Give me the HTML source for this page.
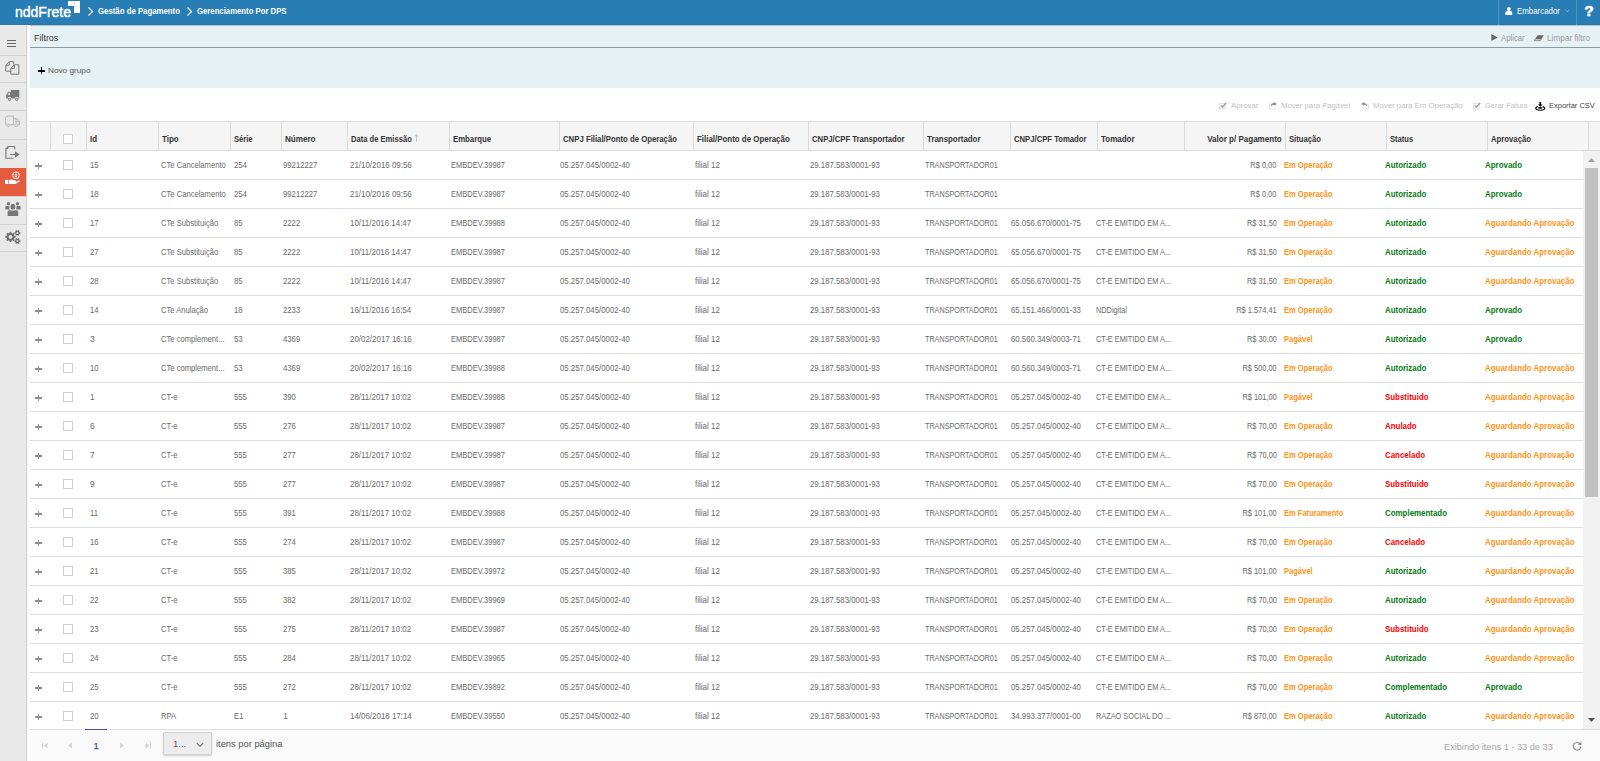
<!DOCTYPE html>
<html lang="pt-BR"><head><meta charset="utf-8"><title>nddFrete - Gerenciamento Por DPS</title>
<style>
html,body{margin:0;padding:0}
body{width:1600px;height:761px;position:relative;overflow:hidden;background:#fff;font-family:'Liberation Sans', sans-serif;}
body>div,body>span,body>svg{position:absolute;display:block}
body>span{white-space:pre}
</style></head><body>
<div style="left:0px;top:0px;width:1600px;height:25px;background:#277db4;"></div>
<div style="left:0px;top:24px;width:1600px;height:1px;background:#2178b3;"></div>
<div style="left:1498px;top:0px;width:1px;height:25px;background:#4d95c3;"></div>
<div style="left:1576px;top:0px;width:1px;height:25px;background:#4d95c3;"></div>
<div style="left:68.2px;top:1.05px;width:11.8px;height:5.45px;background:#fff;"></div>
<div style="left:74.3px;top:6.5px;width:5.7px;height:6.5px;background:#fff;"></div>
<div style="left:74.05px;top:1.05px;width:0.5px;height:5.45px;background:#dde9f2;"></div>
<div style="left:74.3px;top:6.45px;width:5.7px;height:0.45px;background:#dde9f2;"></div>
<svg style="left:87px;top:6px" width="7" height="11" viewBox="0 0 7 11"><path d="M1.5 1.5 L5.5 5.5 L1.5 9.5" fill="none" stroke="#fff" stroke-width="1.2"/></svg>
<svg style="left:186px;top:6px" width="7" height="11" viewBox="0 0 7 11"><path d="M1.5 1.5 L5.5 5.5 L1.5 9.5" fill="none" stroke="#fff" stroke-width="1.2"/></svg>
<svg style="left:1505px;top:6.6px" width="7.6" height="8.4" viewBox="0 0 8 9"><circle cx="4" cy="2.2" r="2.1" fill="#fff"/><path d="M0.3 9 V6.2 Q0.3 4.3 2.2 4.3 H5.8 Q7.7 4.3 7.7 6.2 V9 Z" fill="#fff"/></svg>
<svg style="left:1565px;top:8.5px" width="5" height="4" viewBox="0 0 5 4"><path d="M0.5 0.8 L2.5 2.8 L4.5 0.8" fill="none" stroke="#9cc3de" stroke-width="0.8"/></svg>
<div style="left:0px;top:25px;width:26px;height:736px;background:#e9e9e9;"></div>
<div style="left:26px;top:25px;width:1px;height:736px;background:#d3d3cf;"></div>
<div style="left:0px;top:25px;width:26px;height:1px;background:#f1eeeb;"></div>
<div style="left:27px;top:25px;width:3px;height:736px;background:linear-gradient(90deg,#f0f0f0,#ffffff 60%)"></div>
<div style="left:0px;top:55px;width:26px;height:1px;background:#d2d2d2;"></div>
<div style="left:0px;top:82px;width:26px;height:1px;background:#d2d2d2;"></div>
<div style="left:0px;top:110px;width:26px;height:1px;background:#d2d2d2;"></div>
<div style="left:0px;top:139px;width:26px;height:1px;background:#d2d2d2;"></div>
<div style="left:0px;top:196px;width:26px;height:1px;background:#d2d2d2;"></div>
<div style="left:0px;top:224px;width:26px;height:1px;background:#d2d2d2;"></div>
<div style="left:0px;top:251px;width:26px;height:1px;background:#d2d2d2;"></div>
<div style="left:0px;top:168px;width:26px;height:28px;background:#e25c3d;"></div>
<div style="left:7.3px;top:40px;width:8.7px;height:1px;background:#666;"></div>
<div style="left:7.3px;top:43px;width:8.7px;height:1px;background:#666;"></div>
<div style="left:7.3px;top:46px;width:8.7px;height:1px;background:#666;"></div>
<div style="left:30px;top:25px;width:1570px;height:63px;background:#e6f1f4;"></div>
<div style="left:30px;top:47px;width:1570px;height:1px;background:#8e9a9d;"></div>
<div style="left:30px;top:25px;width:1570px;height:1px;background:#c6c4c0;"></div>
<div style="left:38.1px;top:69.75px;width:6.7px;height:1.8px;background:#000;"></div>
<div style="left:40.55px;top:67.3px;width:1.8px;height:6.7px;background:#000;"></div>
<svg style="left:1491px;top:34.3px" width="7" height="7" viewBox="0 0 7 7"><path d="M0.3 0 L6.8 3.5 L0.3 7 Z" fill="#666"/></svg>
<svg style="left:1534px;top:34.5px" width="10" height="7" viewBox="0 0 10 7"><path d="M3.6 0.3 H9.8 L6.4 5.6 H0.2 Z" fill="#666"/><path d="M1.2 4 H7.4 L6.4 5.6 H0.2 Z" fill="#e6f1f4" stroke="#666" stroke-width="0.6"/></svg>
<svg style="left:1218.6px;top:102px" width="8" height="8" viewBox="0 0 8 8"><rect x="0.6" y="1.4" width="5.6" height="5.4" fill="none" stroke="#dedede" stroke-width="0.9"/><path d="M1.7 3.4 L3.3 5.2 L7.2 0.9" fill="none" stroke="#8f8f8f" stroke-width="1.1"/></svg>
<svg style="left:1268.8px;top:102px" width="8" height="8" viewBox="0 0 8 8"><path d="M2.6 2.2 H0.6 V6.8 H6.2 V5" fill="none" stroke="#dcdcdc" stroke-width="0.9"/><path d="M4.9 0 L7.9 1.9 L4.9 3.8 V2.7 Q3 2.7 1.8 4.6 Q2 1.3 4.9 1.1 Z" fill="#8f8f8f"/></svg>
<svg style="left:1361px;top:102px" width="8" height="8" viewBox="0 0 8 8"><path d="M5.4 2.2 H7.4 V6.8 H1.8 V5" fill="none" stroke="#dcdcdc" stroke-width="0.9"/><path d="M3.1 0 L0.1 1.9 L3.1 3.8 V2.7 Q5 2.7 6.2 4.6 Q6 1.3 3.1 1.1 Z" fill="#8f8f8f"/></svg>
<svg style="left:1473px;top:102px" width="8" height="8" viewBox="0 0 8 8"><rect x="0.6" y="1.4" width="5.6" height="5.4" fill="none" stroke="#dedede" stroke-width="0.9"/><path d="M1.7 3.4 L3.3 5.2 L7.2 0.9" fill="none" stroke="#8f8f8f" stroke-width="1.1"/></svg>
<svg style="left:1535.2px;top:101.6px" width="10.5" height="9.3" viewBox="0 0 11 10"><path d="M4.6 0 H6.4 V2.6 H8 L5.5 5 L3 2.6 H4.6 Z" fill="#000"/><path d="M2.6 4.6 L0.6 6.5 Q0.6 8.9 5.5 8.9 Q10.4 8.9 10.4 6.5 L8.4 4.6" fill="none" stroke="#000" stroke-width="1.2"/><ellipse cx="5.5" cy="6.3" rx="2.6" ry="0.9" fill="#000"/></svg>
<div style="left:30px;top:121px;width:1570px;height:30px;background:#f5f5f5;"></div>
<div style="left:30px;top:121px;width:1570px;height:1px;background:#dcdcdc;"></div>
<div style="left:30px;top:150px;width:1570px;height:1px;background:#dcdcdc;"></div>
<div style="left:50px;top:122px;width:1px;height:28px;background:#dcdcdc;"></div>
<div style="left:86px;top:122px;width:1px;height:28px;background:#dcdcdc;"></div>
<div style="left:158px;top:122px;width:1px;height:28px;background:#dcdcdc;"></div>
<div style="left:230px;top:122px;width:1px;height:28px;background:#dcdcdc;"></div>
<div style="left:281px;top:122px;width:1px;height:28px;background:#dcdcdc;"></div>
<div style="left:347px;top:122px;width:1px;height:28px;background:#dcdcdc;"></div>
<div style="left:449px;top:122px;width:1px;height:28px;background:#dcdcdc;"></div>
<div style="left:559px;top:122px;width:1px;height:28px;background:#dcdcdc;"></div>
<div style="left:693px;top:122px;width:1px;height:28px;background:#dcdcdc;"></div>
<div style="left:808px;top:122px;width:1px;height:28px;background:#dcdcdc;"></div>
<div style="left:923px;top:122px;width:1px;height:28px;background:#dcdcdc;"></div>
<div style="left:1010px;top:122px;width:1px;height:28px;background:#dcdcdc;"></div>
<div style="left:1097px;top:122px;width:1px;height:28px;background:#dcdcdc;"></div>
<div style="left:1184px;top:122px;width:1px;height:28px;background:#dcdcdc;"></div>
<div style="left:1285px;top:122px;width:1px;height:28px;background:#dcdcdc;"></div>
<div style="left:1386px;top:122px;width:1px;height:28px;background:#dcdcdc;"></div>
<div style="left:1487px;top:122px;width:1px;height:28px;background:#dcdcdc;"></div>
<div style="left:1588px;top:122px;width:1px;height:28px;background:#dcdcdc;"></div>
<svg style="left:414.4px;top:134px" width="5" height="8" viewBox="0 0 5 8"><path d="M2.5 1 V7.7" fill="none" stroke="#c6c6c6" stroke-width="1"/><path d="M0.3 2.6 L2.5 0.1 L4.7 2.6 Z" fill="#c6c6c6"/></svg>
<div style="left:63px;top:134px;width:8px;height:8px;background:#fff;border:1px solid #cfcfcf"></div>
<div style="left:30px;top:179px;width:1553px;height:1px;background:#dedede;"></div>
<div style="left:35.3px;top:165.35px;width:6.6px;height:1.3px;background:#8e8e8e;"></div>
<div style="left:37.75px;top:162.7px;width:1.5px;height:6.6px;background:#8e8e8e;"></div>
<div style="left:63px;top:160px;width:8px;height:8px;background:#fff;border:1px solid #cfcfcf"></div>
<div style="left:30px;top:208px;width:1553px;height:1px;background:#dedede;"></div>
<div style="left:35.3px;top:194.35px;width:6.6px;height:1.3px;background:#8e8e8e;"></div>
<div style="left:37.75px;top:191.7px;width:1.5px;height:6.6px;background:#8e8e8e;"></div>
<div style="left:63px;top:189px;width:8px;height:8px;background:#fff;border:1px solid #cfcfcf"></div>
<div style="left:30px;top:237px;width:1553px;height:1px;background:#dedede;"></div>
<div style="left:35.3px;top:223.35px;width:6.6px;height:1.3px;background:#8e8e8e;"></div>
<div style="left:37.75px;top:220.7px;width:1.5px;height:6.6px;background:#8e8e8e;"></div>
<div style="left:63px;top:218px;width:8px;height:8px;background:#fff;border:1px solid #cfcfcf"></div>
<div style="left:30px;top:266px;width:1553px;height:1px;background:#dedede;"></div>
<div style="left:35.3px;top:252.35px;width:6.6px;height:1.3px;background:#8e8e8e;"></div>
<div style="left:37.75px;top:249.7px;width:1.5px;height:6.6px;background:#8e8e8e;"></div>
<div style="left:63px;top:247px;width:8px;height:8px;background:#fff;border:1px solid #cfcfcf"></div>
<div style="left:30px;top:295px;width:1553px;height:1px;background:#dedede;"></div>
<div style="left:35.3px;top:281.35px;width:6.6px;height:1.3px;background:#8e8e8e;"></div>
<div style="left:37.75px;top:278.7px;width:1.5px;height:6.6px;background:#8e8e8e;"></div>
<div style="left:63px;top:276px;width:8px;height:8px;background:#fff;border:1px solid #cfcfcf"></div>
<div style="left:30px;top:324px;width:1553px;height:1px;background:#dedede;"></div>
<div style="left:35.3px;top:310.35px;width:6.6px;height:1.3px;background:#8e8e8e;"></div>
<div style="left:37.75px;top:307.7px;width:1.5px;height:6.6px;background:#8e8e8e;"></div>
<div style="left:63px;top:305px;width:8px;height:8px;background:#fff;border:1px solid #cfcfcf"></div>
<div style="left:30px;top:353px;width:1553px;height:1px;background:#dedede;"></div>
<div style="left:35.3px;top:339.35px;width:6.6px;height:1.3px;background:#8e8e8e;"></div>
<div style="left:37.75px;top:336.7px;width:1.5px;height:6.6px;background:#8e8e8e;"></div>
<div style="left:63px;top:334px;width:8px;height:8px;background:#fff;border:1px solid #cfcfcf"></div>
<div style="left:30px;top:382px;width:1553px;height:1px;background:#dedede;"></div>
<div style="left:35.3px;top:368.35px;width:6.6px;height:1.3px;background:#8e8e8e;"></div>
<div style="left:37.75px;top:365.7px;width:1.5px;height:6.6px;background:#8e8e8e;"></div>
<div style="left:63px;top:363px;width:8px;height:8px;background:#fff;border:1px solid #cfcfcf"></div>
<div style="left:30px;top:411px;width:1553px;height:1px;background:#dedede;"></div>
<div style="left:35.3px;top:397.35px;width:6.6px;height:1.3px;background:#8e8e8e;"></div>
<div style="left:37.75px;top:394.7px;width:1.5px;height:6.6px;background:#8e8e8e;"></div>
<div style="left:63px;top:392px;width:8px;height:8px;background:#fff;border:1px solid #cfcfcf"></div>
<div style="left:30px;top:440px;width:1553px;height:1px;background:#dedede;"></div>
<div style="left:35.3px;top:426.35px;width:6.6px;height:1.3px;background:#8e8e8e;"></div>
<div style="left:37.75px;top:423.7px;width:1.5px;height:6.6px;background:#8e8e8e;"></div>
<div style="left:63px;top:421px;width:8px;height:8px;background:#fff;border:1px solid #cfcfcf"></div>
<div style="left:30px;top:469px;width:1553px;height:1px;background:#dedede;"></div>
<div style="left:35.3px;top:455.35px;width:6.6px;height:1.3px;background:#8e8e8e;"></div>
<div style="left:37.75px;top:452.7px;width:1.5px;height:6.6px;background:#8e8e8e;"></div>
<div style="left:63px;top:450px;width:8px;height:8px;background:#fff;border:1px solid #cfcfcf"></div>
<div style="left:30px;top:498px;width:1553px;height:1px;background:#dedede;"></div>
<div style="left:35.3px;top:484.35px;width:6.6px;height:1.3px;background:#8e8e8e;"></div>
<div style="left:37.75px;top:481.7px;width:1.5px;height:6.6px;background:#8e8e8e;"></div>
<div style="left:63px;top:479px;width:8px;height:8px;background:#fff;border:1px solid #cfcfcf"></div>
<div style="left:30px;top:527px;width:1553px;height:1px;background:#dedede;"></div>
<div style="left:35.3px;top:513.35px;width:6.6px;height:1.3px;background:#8e8e8e;"></div>
<div style="left:37.75px;top:510.7px;width:1.5px;height:6.6px;background:#8e8e8e;"></div>
<div style="left:63px;top:508px;width:8px;height:8px;background:#fff;border:1px solid #cfcfcf"></div>
<div style="left:30px;top:556px;width:1553px;height:1px;background:#dedede;"></div>
<div style="left:35.3px;top:542.35px;width:6.6px;height:1.3px;background:#8e8e8e;"></div>
<div style="left:37.75px;top:539.7px;width:1.5px;height:6.6px;background:#8e8e8e;"></div>
<div style="left:63px;top:537px;width:8px;height:8px;background:#fff;border:1px solid #cfcfcf"></div>
<div style="left:30px;top:585px;width:1553px;height:1px;background:#dedede;"></div>
<div style="left:35.3px;top:571.35px;width:6.6px;height:1.3px;background:#8e8e8e;"></div>
<div style="left:37.75px;top:568.7px;width:1.5px;height:6.6px;background:#8e8e8e;"></div>
<div style="left:63px;top:566px;width:8px;height:8px;background:#fff;border:1px solid #cfcfcf"></div>
<div style="left:30px;top:614px;width:1553px;height:1px;background:#dedede;"></div>
<div style="left:35.3px;top:600.35px;width:6.6px;height:1.3px;background:#8e8e8e;"></div>
<div style="left:37.75px;top:597.7px;width:1.5px;height:6.6px;background:#8e8e8e;"></div>
<div style="left:63px;top:595px;width:8px;height:8px;background:#fff;border:1px solid #cfcfcf"></div>
<div style="left:30px;top:643px;width:1553px;height:1px;background:#dedede;"></div>
<div style="left:35.3px;top:629.35px;width:6.6px;height:1.3px;background:#8e8e8e;"></div>
<div style="left:37.75px;top:626.7px;width:1.5px;height:6.6px;background:#8e8e8e;"></div>
<div style="left:63px;top:624px;width:8px;height:8px;background:#fff;border:1px solid #cfcfcf"></div>
<div style="left:30px;top:672px;width:1553px;height:1px;background:#dedede;"></div>
<div style="left:35.3px;top:658.35px;width:6.6px;height:1.3px;background:#8e8e8e;"></div>
<div style="left:37.75px;top:655.7px;width:1.5px;height:6.6px;background:#8e8e8e;"></div>
<div style="left:63px;top:653px;width:8px;height:8px;background:#fff;border:1px solid #cfcfcf"></div>
<div style="left:30px;top:701px;width:1553px;height:1px;background:#dedede;"></div>
<div style="left:35.3px;top:687.35px;width:6.6px;height:1.3px;background:#8e8e8e;"></div>
<div style="left:37.75px;top:684.7px;width:1.5px;height:6.6px;background:#8e8e8e;"></div>
<div style="left:63px;top:682px;width:8px;height:8px;background:#fff;border:1px solid #cfcfcf"></div>
<div style="left:30px;top:730px;width:1553px;height:1px;background:#dedede;"></div>
<div style="left:35.3px;top:716.35px;width:6.6px;height:1.3px;background:#8e8e8e;"></div>
<div style="left:37.75px;top:713.7px;width:1.5px;height:6.6px;background:#8e8e8e;"></div>
<div style="left:63px;top:711px;width:8px;height:8px;background:#fff;border:1px solid #cfcfcf"></div>
<div style="left:1583px;top:151px;width:17px;height:579px;background:#f1f1f1;"></div>
<div style="left:1585px;top:168px;width:13px;height:329px;background:#c1c1c1;"></div>
<svg style="left:1588px;top:158px" width="7" height="4" viewBox="0 0 7 4"><path d="M0 4 L3.5 0 L7 4 Z" fill="#a3a3a3"/></svg>
<svg style="left:1588px;top:718px" width="7" height="4" viewBox="0 0 7 4"><path d="M0 0 L3.5 4 L7 0 Z" fill="#505050"/></svg>
<div style="left:30px;top:730px;width:1570px;height:31px;background:#fafafa;"></div>
<div style="left:30px;top:729px;width:1570px;height:1px;background:#dedede;"></div>
<div style="left:85px;top:729px;width:22px;height:1.2px;background:#3f51b5;"></div>
<svg style="left:42px;top:742px" width="6" height="7" viewBox="0 0 6 7"><path d="M0.5 0.3 V6.7" stroke="#d2d2d2" stroke-width="1"/><path d="M5.5 0.5 L1.8 3.5 L5.5 6.5 Z" fill="#d2d2d2"/></svg>
<svg style="left:68px;top:742px" width="4" height="7" viewBox="0 0 4 7"><path d="M3.8 0.5 L0.3 3.5 L3.8 6.5 Z" fill="#d2d2d2"/></svg>
<svg style="left:120px;top:742px" width="4" height="7" viewBox="0 0 4 7"><path d="M0.2 0.5 L3.7 3.5 L0.2 6.5 Z" fill="#d2d2d2"/></svg>
<svg style="left:144.5px;top:742px" width="6" height="7" viewBox="0 0 6 7"><path d="M5.5 0.3 V6.7" stroke="#d2d2d2" stroke-width="1"/><path d="M0.5 0.5 L4.2 3.5 L0.5 6.5 Z" fill="#d2d2d2"/></svg>
<div style="left:163px;top:731.6px;width:46.5px;height:21px;background:#ececec;border:1px solid #d0d0d0;border-radius:2px;box-shadow:0 1px 2px rgba(0,0,0,.18)"></div>
<svg style="left:195.5px;top:742px" width="8" height="6" viewBox="0 0 8 6"><path d="M0.8 1 L4 4.4 L7.2 1" fill="none" stroke="#777" stroke-width="1.1"/></svg>
<svg style="left:1572px;top:741px" width="10" height="10" viewBox="0 0 10 10"><path d="M8.3 3.2 A3.8 3.8 0 1 0 8.9 5.4" fill="none" stroke="#8a8a8a" stroke-width="1.1"/><path d="M9.4 0.4 V3.9 H5.9 Z" fill="#8a8a8a"/></svg>
<svg style="left:0;top:0" width="26" height="260" viewBox="0 0 26 260"><g fill="none" stroke="#777" stroke-width="1" stroke-linejoin="round"><path d="M10.8 71.2 H5.8 V65.2 L9.3 61.6 H13.7 V64.6"/><path d="M9.3 61.8 V65.2 H6"/><path d="M14.4 64.8 H18.8 V74.2 H10.8 V68.4 Z"/><path d="M14.4 65 V68.4 H11"/></g><path d="M10.8 90.1 H19.3 V98.6 H18.6 A1.9 1.9 0 0 0 14.8 98.6 H11.5 A1.9 1.9 0 0 0 7.7 98.6 H6.2 V95 L8.2 92 H10.8 Z M7.4 95 H10.2 V93 H8.7 Z" fill="#777" fill-rule="evenodd"/><circle cx="9.6" cy="99.3" r="1.25" fill="none" stroke="#777" stroke-width="0.9"/><circle cx="16.7" cy="99.3" r="1.25" fill="none" stroke="#777" stroke-width="0.9"/><g fill="none" stroke="#b3b3b3" stroke-width="0.9" stroke-linejoin="round"><path d="M5.6 124.8 V117.4 L7 116 H13.4 V124.8"/><path d="M13.4 118.7 H17.2 L19.5 121.3 V124.8 H18 M14.6 124.8 H9.8 M6.6 124.8 H5.6"/><path d="M15 120 H18 M15 121.6 H19 M15 123 H19" stroke-width="0.7"/><circle cx="8.2" cy="125.4" r="1.3"/><circle cx="16.3" cy="125.4" r="1.3"/></g><g fill="none" stroke="#777" stroke-width="1.1" stroke-linejoin="round"><path d="M14.7 149.2 V146.5 H8.2 L5.9 148.8 V158.2 H13.5"/><path d="M10.2 154.5 H15.5" stroke-width="1.2"/></g><path d="M8.4 146.6 V149 H6 Z" fill="#777"/><path d="M15 151.3 L19.7 154.5 L15 157.7 Z" fill="#777"/><circle cx="16" cy="175.3" r="3.3" fill="none" stroke="#fff" stroke-width="1"/><path d="M16 173.4 V177.2 M17 174.3 Q16 173.7 15.2 174.3 Q14.8 175 16 175.3 Q17.2 175.7 16.8 176.4 Q16 177 15 176.3" fill="none" stroke="#fff" stroke-width="0.6"/><rect x="5" y="179.8" width="3.4" height="4.2" fill="#fff"/><path d="M9 179.9 Q11 179.2 12.5 179.8 L15.5 180.6 Q16.2 181.2 15.6 181.8 L18.8 180.6 Q19.9 180.4 19.9 181.2 L15.5 184 H9 Z" fill="#fff"/><g fill="#777"><circle cx="8.5" cy="203.8" r="1.7"/><circle cx="17.5" cy="203.8" r="1.7"/><path d="M5.3 209.6 V207.3 Q5.3 206.1 6.5 206.1 H9.6 V209.6 Z"/><path d="M20.6 209.6 V207.3 Q20.6 206.1 19.4 206.1 H16.3 V209.6 Z"/><ellipse cx="12.9" cy="206.8" rx="2.6" ry="3"/><path d="M7.6 215.7 V212 Q7.6 210.3 9.4 210.3 H16.4 Q18.2 210.3 18.2 212 V215.7 Q18.2 215.9 17.6 215.9 H8.2 Q7.6 215.9 7.6 215.7 Z"/></g><ellipse cx="12.9" cy="206.8" rx="3.2" ry="3.6" fill="none" stroke="#e9e9e9" stroke-width="0.7"/><path d="M15.62 236.01 L15.62 237.79 L14.39 237.83 L13.91 238.99 L14.75 239.89 L13.49 241.15 L12.59 240.31 L11.43 240.79 L11.39 242.02 L9.61 242.02 L9.57 240.79 L8.41 240.31 L7.51 241.15 L6.25 239.89 L7.09 238.99 L6.61 237.83 L5.38 237.79 L5.38 236.01 L6.61 235.97 L7.09 234.81 L6.25 233.91 L7.51 232.65 L8.41 233.49 L9.57 233.01 L9.61 231.78 L11.39 231.78 L11.43 233.01 L12.59 233.49 L13.49 232.65 L14.75 233.91 L13.91 234.81 L14.39 235.97 Z M12.40 236.90 A1.9 1.9 0 1 0 8.60 236.90 A1.9 1.9 0 1 0 12.40 236.90 Z" fill="#6e6e6e" fill-rule="evenodd"/><path d="M20.42 232.19 L20.42 233.61 L19.59 233.61 L19.11 234.44 L19.52 235.16 L18.30 235.87 L17.88 235.15 L16.92 235.15 L16.50 235.87 L15.28 235.16 L15.69 234.44 L15.21 233.61 L14.38 233.61 L14.38 232.19 L15.21 232.19 L15.69 231.36 L15.28 230.64 L16.50 229.93 L16.92 230.65 L17.88 230.65 L18.30 229.93 L19.52 230.64 L19.11 231.36 L19.59 232.19 Z M18.40 232.90 A1.0 1.0 0 1 0 16.40 232.90 A1.0 1.0 0 1 0 18.40 232.90 Z" fill="#6e6e6e" fill-rule="evenodd"/><path d="M20.42 240.29 L20.42 241.71 L19.59 241.71 L19.11 242.54 L19.52 243.26 L18.30 243.97 L17.88 243.25 L16.92 243.25 L16.50 243.97 L15.28 243.26 L15.69 242.54 L15.21 241.71 L14.38 241.71 L14.38 240.29 L15.21 240.29 L15.69 239.46 L15.28 238.74 L16.50 238.03 L16.92 238.75 L17.88 238.75 L18.30 238.03 L19.52 238.74 L19.11 239.46 L19.59 240.29 Z M18.40 241.00 A1.0 1.0 0 1 0 16.40 241.00 A1.0 1.0 0 1 0 18.40 241.00 Z" fill="#6e6e6e" fill-rule="evenodd"/></svg>
<span style="top:3.00px;font-size:15.5px;line-height:18px;color:#fff;left:14.80px;transform:scaleX(0.9025);transform-origin:left center;-webkit-text-stroke:0.45px #fff;">nddFrete</span>
<span style="top:5.00px;font-size:8.5px;line-height:12px;color:#fff;font-weight:700;left:98.00px;transform:scaleX(0.9184);transform-origin:left center;">Gestão de Pagamento</span>
<span style="top:5.00px;font-size:8.5px;line-height:12px;color:#fff;font-weight:700;left:196.50px;transform:scaleX(0.9108);transform-origin:left center;">Gerenciamento Por DPS</span>
<span style="top:5.40px;font-size:9px;line-height:12px;color:#fff;left:1517.00px;transform:scaleX(0.8770);transform-origin:left center;">Embarcador</span>
<span style="top:0.50px;font-size:15px;line-height:20px;color:#fff;font-weight:700;left:1584.60px;-webkit-text-stroke:0.7px #fff;">?</span>
<span style="top:30.80px;font-size:9.5px;line-height:14px;color:#333;left:33.70px;transform:scaleX(0.9391);transform-origin:left center;">Filtros</span>
<span style="top:64.60px;font-size:8px;line-height:12px;color:#555;left:48.10px;transform:scaleX(1.0276);transform-origin:left center;">Novo grupo</span>
<span style="top:32.40px;font-size:8.5px;line-height:12px;color:#999;left:1501.30px;transform:scaleX(0.9121);transform-origin:left center;">Aplicar</span>
<span style="top:32.40px;font-size:8.5px;line-height:12px;color:#999;left:1546.90px;transform:scaleX(0.9706);transform-origin:left center;">Limpar filtro</span>
<span style="top:100.00px;font-size:8px;line-height:12px;color:#c2c2c2;left:1230.90px;transform:scaleX(0.9816);transform-origin:left center;">Aprovar</span>
<span style="top:100.00px;font-size:8px;line-height:12px;color:#c2c2c2;left:1281.00px;transform:scaleX(0.9638);transform-origin:left center;">Mover para Pagável</span>
<span style="top:100.00px;font-size:8px;line-height:12px;color:#c2c2c2;left:1372.75px;transform:scaleX(0.9750);transform-origin:left center;">Mover para Em Operação</span>
<span style="top:100.00px;font-size:8px;line-height:12px;color:#c2c2c2;left:1485.00px;transform:scaleX(0.9335);transform-origin:left center;">Gerar Fatura</span>
<span style="top:100.00px;font-size:8px;line-height:12px;color:#444;left:1548.75px;transform:scaleX(0.9375);transform-origin:left center;">Exportar CSV</span>
<span style="top:132.60px;font-size:8.4px;line-height:12px;color:#333;font-weight:700;left:90.40px;transform:scaleX(0.9392);transform-origin:left center;">Id</span>
<span style="top:132.60px;font-size:8.4px;line-height:12px;color:#333;font-weight:700;left:162.00px;transform:scaleX(0.9554);transform-origin:left center;">Tipo</span>
<span style="top:132.60px;font-size:8.4px;line-height:12px;color:#333;font-weight:700;left:234.00px;transform:scaleX(0.9024);transform-origin:left center;">Série</span>
<span style="top:132.60px;font-size:8.4px;line-height:12px;color:#333;font-weight:700;left:285.25px;transform:scaleX(0.9635);transform-origin:left center;">Número</span>
<span style="top:132.60px;font-size:8.4px;line-height:12px;color:#333;font-weight:700;left:351.40px;transform:scaleX(0.9070);transform-origin:left center;">Data de Emissão</span>
<span style="top:132.60px;font-size:8.4px;line-height:12px;color:#333;font-weight:700;left:453.25px;transform:scaleX(0.9275);transform-origin:left center;">Embarque</span>
<span style="top:132.60px;font-size:8.4px;line-height:12px;color:#333;font-weight:700;left:563.00px;transform:scaleX(0.9278);transform-origin:left center;">CNPJ Filial/Ponto de Operação</span>
<span style="top:132.60px;font-size:8.4px;line-height:12px;color:#333;font-weight:700;left:697.25px;transform:scaleX(0.9445);transform-origin:left center;">Filial/Ponto de Operação</span>
<span style="top:132.60px;font-size:8.4px;line-height:12px;color:#333;font-weight:700;left:812.00px;transform:scaleX(0.9203);transform-origin:left center;">CNPJ/CPF Transportador</span>
<span style="top:132.60px;font-size:8.4px;line-height:12px;color:#333;font-weight:700;left:927.00px;transform:scaleX(0.9422);transform-origin:left center;">Transportador</span>
<span style="top:132.60px;font-size:8.4px;line-height:12px;color:#333;font-weight:700;left:1014.00px;transform:scaleX(0.9183);transform-origin:left center;">CNPJ/CPF Tomador</span>
<span style="top:132.60px;font-size:8.4px;line-height:12px;color:#333;font-weight:700;left:1101.00px;transform:scaleX(0.9512);transform-origin:left center;">Tomador</span>
<span style="top:132.60px;font-size:8.4px;line-height:12px;color:#333;font-weight:700;left:1289.00px;transform:scaleX(0.9163);transform-origin:left center;">Situação</span>
<span style="top:132.60px;font-size:8.4px;line-height:12px;color:#333;font-weight:700;left:1390.00px;transform:scaleX(0.9020);transform-origin:left center;">Status</span>
<span style="top:132.60px;font-size:8.4px;line-height:12px;color:#333;font-weight:700;left:1491.25px;transform:scaleX(0.9239);transform-origin:left center;">Aprovação</span>
<span style="top:132.60px;font-size:8.4px;line-height:12px;color:#333;font-weight:700;right:318.50px;transform:scaleX(0.9597);transform-origin:right center;">Valor p/ Pagamento</span>
<span style="top:159.00px;font-size:8.4px;line-height:12px;color:#6a6a6a;left:90.00px;transform:scaleX(0.9238);transform-origin:left center;">15</span>
<span style="top:159.00px;font-size:8.4px;line-height:12px;color:#6a6a6a;left:161.20px;transform:scaleX(0.9095);transform-origin:left center;">CTe Cancelamento</span>
<span style="top:159.00px;font-size:8.4px;line-height:12px;color:#6a6a6a;left:233.50px;transform:scaleX(0.9238);transform-origin:left center;">254</span>
<span style="top:159.00px;font-size:8.4px;line-height:12px;color:#6a6a6a;left:283.25px;transform:scaleX(0.9238);transform-origin:left center;">99212227</span>
<span style="top:159.00px;font-size:8.4px;line-height:12px;color:#6a6a6a;left:349.50px;transform:scaleX(0.9476);transform-origin:left center;">21/10/2016 09:56</span>
<span style="top:159.00px;font-size:8.4px;line-height:12px;color:#6a6a6a;left:451.25px;transform:scaleX(0.8952);transform-origin:left center;">EMBDEV.39987</span>
<span style="top:159.00px;font-size:8.4px;line-height:12px;color:#6a6a6a;left:560.25px;transform:scaleX(0.9314);transform-origin:left center;">05.257.045/0002-40</span>
<span style="top:159.00px;font-size:8.4px;line-height:12px;color:#6a6a6a;left:694.50px;transform:scaleX(0.9524);transform-origin:left center;">filial 12</span>
<span style="top:159.00px;font-size:8.4px;line-height:12px;color:#6a6a6a;left:809.50px;transform:scaleX(0.9314);transform-origin:left center;">29.187.583/0001-93</span>
<span style="top:159.00px;font-size:8.4px;line-height:12px;color:#6a6a6a;left:924.50px;transform:scaleX(0.8619);transform-origin:left center;">TRANSPORTADOR01</span>
<span style="top:159.00px;font-size:8.4px;line-height:12px;color:#6a6a6a;right:323.50px;transform:scaleX(0.8857);transform-origin:right center;">R$ 0,00</span>
<span style="top:159.00px;font-size:8.4px;line-height:12px;color:#ff9416;font-weight:700;left:1283.50px;transform:scaleX(0.9000);transform-origin:left center;">Em Operação</span>
<span style="top:159.00px;font-size:8.4px;line-height:12px;color:#057c12;font-weight:700;left:1384.50px;transform:scaleX(0.9457);transform-origin:left center;">Autorizado</span>
<span style="top:159.00px;font-size:8.4px;line-height:12px;color:#057c12;font-weight:700;left:1485.40px;transform:scaleX(0.9457);transform-origin:left center;">Aprovado</span>
<span style="top:188.00px;font-size:8.4px;line-height:12px;color:#6a6a6a;left:90.00px;transform:scaleX(0.9238);transform-origin:left center;">18</span>
<span style="top:188.00px;font-size:8.4px;line-height:12px;color:#6a6a6a;left:161.20px;transform:scaleX(0.9095);transform-origin:left center;">CTe Cancelamento</span>
<span style="top:188.00px;font-size:8.4px;line-height:12px;color:#6a6a6a;left:233.50px;transform:scaleX(0.9238);transform-origin:left center;">254</span>
<span style="top:188.00px;font-size:8.4px;line-height:12px;color:#6a6a6a;left:283.25px;transform:scaleX(0.9238);transform-origin:left center;">99212227</span>
<span style="top:188.00px;font-size:8.4px;line-height:12px;color:#6a6a6a;left:349.50px;transform:scaleX(0.9476);transform-origin:left center;">21/10/2016 09:56</span>
<span style="top:188.00px;font-size:8.4px;line-height:12px;color:#6a6a6a;left:451.25px;transform:scaleX(0.8952);transform-origin:left center;">EMBDEV.39987</span>
<span style="top:188.00px;font-size:8.4px;line-height:12px;color:#6a6a6a;left:560.25px;transform:scaleX(0.9314);transform-origin:left center;">05.257.045/0002-40</span>
<span style="top:188.00px;font-size:8.4px;line-height:12px;color:#6a6a6a;left:694.50px;transform:scaleX(0.9524);transform-origin:left center;">filial 12</span>
<span style="top:188.00px;font-size:8.4px;line-height:12px;color:#6a6a6a;left:809.50px;transform:scaleX(0.9314);transform-origin:left center;">29.187.583/0001-93</span>
<span style="top:188.00px;font-size:8.4px;line-height:12px;color:#6a6a6a;left:924.50px;transform:scaleX(0.8619);transform-origin:left center;">TRANSPORTADOR01</span>
<span style="top:188.00px;font-size:8.4px;line-height:12px;color:#6a6a6a;right:323.50px;transform:scaleX(0.8857);transform-origin:right center;">R$ 0,00</span>
<span style="top:188.00px;font-size:8.4px;line-height:12px;color:#ff9416;font-weight:700;left:1283.50px;transform:scaleX(0.9000);transform-origin:left center;">Em Operação</span>
<span style="top:188.00px;font-size:8.4px;line-height:12px;color:#057c12;font-weight:700;left:1384.50px;transform:scaleX(0.9457);transform-origin:left center;">Autorizado</span>
<span style="top:188.00px;font-size:8.4px;line-height:12px;color:#057c12;font-weight:700;left:1485.40px;transform:scaleX(0.9457);transform-origin:left center;">Aprovado</span>
<span style="top:217.00px;font-size:8.4px;line-height:12px;color:#6a6a6a;left:90.00px;transform:scaleX(0.9238);transform-origin:left center;">17</span>
<span style="top:217.00px;font-size:8.4px;line-height:12px;color:#6a6a6a;left:161.20px;transform:scaleX(0.9095);transform-origin:left center;">CTe Substituição</span>
<span style="top:217.00px;font-size:8.4px;line-height:12px;color:#6a6a6a;left:233.50px;transform:scaleX(0.9238);transform-origin:left center;">85</span>
<span style="top:217.00px;font-size:8.4px;line-height:12px;color:#6a6a6a;left:283.25px;transform:scaleX(0.9238);transform-origin:left center;">2222</span>
<span style="top:217.00px;font-size:8.4px;line-height:12px;color:#6a6a6a;left:349.50px;transform:scaleX(0.9476);transform-origin:left center;">10/11/2016 14:47</span>
<span style="top:217.00px;font-size:8.4px;line-height:12px;color:#6a6a6a;left:451.25px;transform:scaleX(0.8952);transform-origin:left center;">EMBDEV.39988</span>
<span style="top:217.00px;font-size:8.4px;line-height:12px;color:#6a6a6a;left:560.25px;transform:scaleX(0.9314);transform-origin:left center;">05.257.045/0002-40</span>
<span style="top:217.00px;font-size:8.4px;line-height:12px;color:#6a6a6a;left:694.50px;transform:scaleX(0.9524);transform-origin:left center;">filial 12</span>
<span style="top:217.00px;font-size:8.4px;line-height:12px;color:#6a6a6a;left:809.50px;transform:scaleX(0.9314);transform-origin:left center;">29.187.583/0001-93</span>
<span style="top:217.00px;font-size:8.4px;line-height:12px;color:#6a6a6a;left:924.50px;transform:scaleX(0.8619);transform-origin:left center;">TRANSPORTADOR01</span>
<span style="top:217.00px;font-size:8.4px;line-height:12px;color:#6a6a6a;left:1010.50px;transform:scaleX(0.9314);transform-origin:left center;">65.056.670/0001-75</span>
<span style="top:217.00px;font-size:8.4px;line-height:12px;color:#6a6a6a;left:1096.25px;transform:scaleX(0.8762);transform-origin:left center;">CT-E EMITIDO EM A...</span>
<span style="top:217.00px;font-size:8.4px;line-height:12px;color:#6a6a6a;right:323.50px;transform:scaleX(0.8857);transform-origin:right center;">R$ 31,50</span>
<span style="top:217.00px;font-size:8.4px;line-height:12px;color:#ff9416;font-weight:700;left:1283.50px;transform:scaleX(0.9000);transform-origin:left center;">Em Operação</span>
<span style="top:217.00px;font-size:8.4px;line-height:12px;color:#057c12;font-weight:700;left:1384.50px;transform:scaleX(0.9457);transform-origin:left center;">Autorizado</span>
<span style="top:217.00px;font-size:8.4px;line-height:12px;color:#ff9416;font-weight:700;left:1485.40px;transform:scaleX(0.9457);transform-origin:left center;">Aguardando Aprovação</span>
<span style="top:246.00px;font-size:8.4px;line-height:12px;color:#6a6a6a;left:90.00px;transform:scaleX(0.9238);transform-origin:left center;">27</span>
<span style="top:246.00px;font-size:8.4px;line-height:12px;color:#6a6a6a;left:161.20px;transform:scaleX(0.9095);transform-origin:left center;">CTe Substituição</span>
<span style="top:246.00px;font-size:8.4px;line-height:12px;color:#6a6a6a;left:233.50px;transform:scaleX(0.9238);transform-origin:left center;">85</span>
<span style="top:246.00px;font-size:8.4px;line-height:12px;color:#6a6a6a;left:283.25px;transform:scaleX(0.9238);transform-origin:left center;">2222</span>
<span style="top:246.00px;font-size:8.4px;line-height:12px;color:#6a6a6a;left:349.50px;transform:scaleX(0.9476);transform-origin:left center;">10/11/2016 14:47</span>
<span style="top:246.00px;font-size:8.4px;line-height:12px;color:#6a6a6a;left:451.25px;transform:scaleX(0.8952);transform-origin:left center;">EMBDEV.39987</span>
<span style="top:246.00px;font-size:8.4px;line-height:12px;color:#6a6a6a;left:560.25px;transform:scaleX(0.9314);transform-origin:left center;">05.257.045/0002-40</span>
<span style="top:246.00px;font-size:8.4px;line-height:12px;color:#6a6a6a;left:694.50px;transform:scaleX(0.9524);transform-origin:left center;">filial 12</span>
<span style="top:246.00px;font-size:8.4px;line-height:12px;color:#6a6a6a;left:809.50px;transform:scaleX(0.9314);transform-origin:left center;">29.187.583/0001-93</span>
<span style="top:246.00px;font-size:8.4px;line-height:12px;color:#6a6a6a;left:924.50px;transform:scaleX(0.8619);transform-origin:left center;">TRANSPORTADOR01</span>
<span style="top:246.00px;font-size:8.4px;line-height:12px;color:#6a6a6a;left:1010.50px;transform:scaleX(0.9314);transform-origin:left center;">65.056.670/0001-75</span>
<span style="top:246.00px;font-size:8.4px;line-height:12px;color:#6a6a6a;left:1096.25px;transform:scaleX(0.8762);transform-origin:left center;">CT-E EMITIDO EM A...</span>
<span style="top:246.00px;font-size:8.4px;line-height:12px;color:#6a6a6a;right:323.50px;transform:scaleX(0.8857);transform-origin:right center;">R$ 31,50</span>
<span style="top:246.00px;font-size:8.4px;line-height:12px;color:#ff9416;font-weight:700;left:1283.50px;transform:scaleX(0.9000);transform-origin:left center;">Em Operação</span>
<span style="top:246.00px;font-size:8.4px;line-height:12px;color:#057c12;font-weight:700;left:1384.50px;transform:scaleX(0.9457);transform-origin:left center;">Autorizado</span>
<span style="top:246.00px;font-size:8.4px;line-height:12px;color:#ff9416;font-weight:700;left:1485.40px;transform:scaleX(0.9457);transform-origin:left center;">Aguardando Aprovação</span>
<span style="top:275.00px;font-size:8.4px;line-height:12px;color:#6a6a6a;left:90.00px;transform:scaleX(0.9238);transform-origin:left center;">28</span>
<span style="top:275.00px;font-size:8.4px;line-height:12px;color:#6a6a6a;left:161.20px;transform:scaleX(0.9095);transform-origin:left center;">CTe Substituição</span>
<span style="top:275.00px;font-size:8.4px;line-height:12px;color:#6a6a6a;left:233.50px;transform:scaleX(0.9238);transform-origin:left center;">85</span>
<span style="top:275.00px;font-size:8.4px;line-height:12px;color:#6a6a6a;left:283.25px;transform:scaleX(0.9238);transform-origin:left center;">2222</span>
<span style="top:275.00px;font-size:8.4px;line-height:12px;color:#6a6a6a;left:349.50px;transform:scaleX(0.9476);transform-origin:left center;">10/11/2016 14:47</span>
<span style="top:275.00px;font-size:8.4px;line-height:12px;color:#6a6a6a;left:451.25px;transform:scaleX(0.8952);transform-origin:left center;">EMBDEV.39987</span>
<span style="top:275.00px;font-size:8.4px;line-height:12px;color:#6a6a6a;left:560.25px;transform:scaleX(0.9314);transform-origin:left center;">05.257.045/0002-40</span>
<span style="top:275.00px;font-size:8.4px;line-height:12px;color:#6a6a6a;left:694.50px;transform:scaleX(0.9524);transform-origin:left center;">filial 12</span>
<span style="top:275.00px;font-size:8.4px;line-height:12px;color:#6a6a6a;left:809.50px;transform:scaleX(0.9314);transform-origin:left center;">29.187.583/0001-93</span>
<span style="top:275.00px;font-size:8.4px;line-height:12px;color:#6a6a6a;left:924.50px;transform:scaleX(0.8619);transform-origin:left center;">TRANSPORTADOR01</span>
<span style="top:275.00px;font-size:8.4px;line-height:12px;color:#6a6a6a;left:1010.50px;transform:scaleX(0.9314);transform-origin:left center;">65.056.670/0001-75</span>
<span style="top:275.00px;font-size:8.4px;line-height:12px;color:#6a6a6a;left:1096.25px;transform:scaleX(0.8762);transform-origin:left center;">CT-E EMITIDO EM A...</span>
<span style="top:275.00px;font-size:8.4px;line-height:12px;color:#6a6a6a;right:323.50px;transform:scaleX(0.8857);transform-origin:right center;">R$ 31,50</span>
<span style="top:275.00px;font-size:8.4px;line-height:12px;color:#ff9416;font-weight:700;left:1283.50px;transform:scaleX(0.9000);transform-origin:left center;">Em Operação</span>
<span style="top:275.00px;font-size:8.4px;line-height:12px;color:#057c12;font-weight:700;left:1384.50px;transform:scaleX(0.9457);transform-origin:left center;">Autorizado</span>
<span style="top:275.00px;font-size:8.4px;line-height:12px;color:#ff9416;font-weight:700;left:1485.40px;transform:scaleX(0.9457);transform-origin:left center;">Aguardando Aprovação</span>
<span style="top:304.00px;font-size:8.4px;line-height:12px;color:#6a6a6a;left:90.00px;transform:scaleX(0.9238);transform-origin:left center;">14</span>
<span style="top:304.00px;font-size:8.4px;line-height:12px;color:#6a6a6a;left:161.20px;transform:scaleX(0.9095);transform-origin:left center;">CTe Anulação</span>
<span style="top:304.00px;font-size:8.4px;line-height:12px;color:#6a6a6a;left:233.50px;transform:scaleX(0.9238);transform-origin:left center;">18</span>
<span style="top:304.00px;font-size:8.4px;line-height:12px;color:#6a6a6a;left:283.25px;transform:scaleX(0.9238);transform-origin:left center;">2233</span>
<span style="top:304.00px;font-size:8.4px;line-height:12px;color:#6a6a6a;left:349.50px;transform:scaleX(0.9476);transform-origin:left center;">16/11/2016 16:54</span>
<span style="top:304.00px;font-size:8.4px;line-height:12px;color:#6a6a6a;left:451.25px;transform:scaleX(0.8952);transform-origin:left center;">EMBDEV.39987</span>
<span style="top:304.00px;font-size:8.4px;line-height:12px;color:#6a6a6a;left:560.25px;transform:scaleX(0.9314);transform-origin:left center;">05.257.045/0002-40</span>
<span style="top:304.00px;font-size:8.4px;line-height:12px;color:#6a6a6a;left:694.50px;transform:scaleX(0.9524);transform-origin:left center;">filial 12</span>
<span style="top:304.00px;font-size:8.4px;line-height:12px;color:#6a6a6a;left:809.50px;transform:scaleX(0.9314);transform-origin:left center;">29.187.583/0001-93</span>
<span style="top:304.00px;font-size:8.4px;line-height:12px;color:#6a6a6a;left:924.50px;transform:scaleX(0.8619);transform-origin:left center;">TRANSPORTADOR01</span>
<span style="top:304.00px;font-size:8.4px;line-height:12px;color:#6a6a6a;left:1010.50px;transform:scaleX(0.9314);transform-origin:left center;">65.151.466/0001-33</span>
<span style="top:304.00px;font-size:8.4px;line-height:12px;color:#6a6a6a;left:1096.25px;transform:scaleX(0.8762);transform-origin:left center;">NDDigital</span>
<span style="top:304.00px;font-size:8.4px;line-height:12px;color:#6a6a6a;right:323.50px;transform:scaleX(0.8857);transform-origin:right center;">R$ 1.574,41</span>
<span style="top:304.00px;font-size:8.4px;line-height:12px;color:#ff9416;font-weight:700;left:1283.50px;transform:scaleX(0.9000);transform-origin:left center;">Em Operação</span>
<span style="top:304.00px;font-size:8.4px;line-height:12px;color:#057c12;font-weight:700;left:1384.50px;transform:scaleX(0.9457);transform-origin:left center;">Autorizado</span>
<span style="top:304.00px;font-size:8.4px;line-height:12px;color:#057c12;font-weight:700;left:1485.40px;transform:scaleX(0.9457);transform-origin:left center;">Aprovado</span>
<span style="top:333.00px;font-size:8.4px;line-height:12px;color:#6a6a6a;left:90.00px;">3</span>
<span style="top:333.00px;font-size:8.4px;line-height:12px;color:#6a6a6a;left:161.20px;transform:scaleX(0.9095);transform-origin:left center;">CTe complement...</span>
<span style="top:333.00px;font-size:8.4px;line-height:12px;color:#6a6a6a;left:233.50px;transform:scaleX(0.9238);transform-origin:left center;">53</span>
<span style="top:333.00px;font-size:8.4px;line-height:12px;color:#6a6a6a;left:283.25px;transform:scaleX(0.9238);transform-origin:left center;">4369</span>
<span style="top:333.00px;font-size:8.4px;line-height:12px;color:#6a6a6a;left:349.50px;transform:scaleX(0.9476);transform-origin:left center;">20/02/2017 16:16</span>
<span style="top:333.00px;font-size:8.4px;line-height:12px;color:#6a6a6a;left:451.25px;transform:scaleX(0.8952);transform-origin:left center;">EMBDEV.39987</span>
<span style="top:333.00px;font-size:8.4px;line-height:12px;color:#6a6a6a;left:560.25px;transform:scaleX(0.9314);transform-origin:left center;">05.257.045/0002-40</span>
<span style="top:333.00px;font-size:8.4px;line-height:12px;color:#6a6a6a;left:694.50px;transform:scaleX(0.9524);transform-origin:left center;">filial 12</span>
<span style="top:333.00px;font-size:8.4px;line-height:12px;color:#6a6a6a;left:809.50px;transform:scaleX(0.9314);transform-origin:left center;">29.187.583/0001-93</span>
<span style="top:333.00px;font-size:8.4px;line-height:12px;color:#6a6a6a;left:924.50px;transform:scaleX(0.8619);transform-origin:left center;">TRANSPORTADOR01</span>
<span style="top:333.00px;font-size:8.4px;line-height:12px;color:#6a6a6a;left:1010.50px;transform:scaleX(0.9314);transform-origin:left center;">60.560.349/0003-71</span>
<span style="top:333.00px;font-size:8.4px;line-height:12px;color:#6a6a6a;left:1096.25px;transform:scaleX(0.8762);transform-origin:left center;">CT-E EMITIDO EM A...</span>
<span style="top:333.00px;font-size:8.4px;line-height:12px;color:#6a6a6a;right:323.50px;transform:scaleX(0.8857);transform-origin:right center;">R$ 30,00</span>
<span style="top:333.00px;font-size:8.4px;line-height:12px;color:#ff9416;font-weight:700;left:1283.50px;transform:scaleX(0.9000);transform-origin:left center;">Pagável</span>
<span style="top:333.00px;font-size:8.4px;line-height:12px;color:#057c12;font-weight:700;left:1384.50px;transform:scaleX(0.9457);transform-origin:left center;">Autorizado</span>
<span style="top:333.00px;font-size:8.4px;line-height:12px;color:#057c12;font-weight:700;left:1485.40px;transform:scaleX(0.9457);transform-origin:left center;">Aprovado</span>
<span style="top:362.00px;font-size:8.4px;line-height:12px;color:#6a6a6a;left:90.00px;transform:scaleX(0.9238);transform-origin:left center;">10</span>
<span style="top:362.00px;font-size:8.4px;line-height:12px;color:#6a6a6a;left:161.20px;transform:scaleX(0.9095);transform-origin:left center;">CTe complement...</span>
<span style="top:362.00px;font-size:8.4px;line-height:12px;color:#6a6a6a;left:233.50px;transform:scaleX(0.9238);transform-origin:left center;">53</span>
<span style="top:362.00px;font-size:8.4px;line-height:12px;color:#6a6a6a;left:283.25px;transform:scaleX(0.9238);transform-origin:left center;">4369</span>
<span style="top:362.00px;font-size:8.4px;line-height:12px;color:#6a6a6a;left:349.50px;transform:scaleX(0.9476);transform-origin:left center;">20/02/2017 16:16</span>
<span style="top:362.00px;font-size:8.4px;line-height:12px;color:#6a6a6a;left:451.25px;transform:scaleX(0.8952);transform-origin:left center;">EMBDEV.39988</span>
<span style="top:362.00px;font-size:8.4px;line-height:12px;color:#6a6a6a;left:560.25px;transform:scaleX(0.9314);transform-origin:left center;">05.257.045/0002-40</span>
<span style="top:362.00px;font-size:8.4px;line-height:12px;color:#6a6a6a;left:694.50px;transform:scaleX(0.9524);transform-origin:left center;">filial 12</span>
<span style="top:362.00px;font-size:8.4px;line-height:12px;color:#6a6a6a;left:809.50px;transform:scaleX(0.9314);transform-origin:left center;">29.187.583/0001-93</span>
<span style="top:362.00px;font-size:8.4px;line-height:12px;color:#6a6a6a;left:924.50px;transform:scaleX(0.8619);transform-origin:left center;">TRANSPORTADOR01</span>
<span style="top:362.00px;font-size:8.4px;line-height:12px;color:#6a6a6a;left:1010.50px;transform:scaleX(0.9314);transform-origin:left center;">60.560.349/0003-71</span>
<span style="top:362.00px;font-size:8.4px;line-height:12px;color:#6a6a6a;left:1096.25px;transform:scaleX(0.8762);transform-origin:left center;">CT-E EMITIDO EM A...</span>
<span style="top:362.00px;font-size:8.4px;line-height:12px;color:#6a6a6a;right:323.50px;transform:scaleX(0.8857);transform-origin:right center;">R$ 500,00</span>
<span style="top:362.00px;font-size:8.4px;line-height:12px;color:#ff9416;font-weight:700;left:1283.50px;transform:scaleX(0.9000);transform-origin:left center;">Em Operação</span>
<span style="top:362.00px;font-size:8.4px;line-height:12px;color:#057c12;font-weight:700;left:1384.50px;transform:scaleX(0.9457);transform-origin:left center;">Autorizado</span>
<span style="top:362.00px;font-size:8.4px;line-height:12px;color:#ff9416;font-weight:700;left:1485.40px;transform:scaleX(0.9457);transform-origin:left center;">Aguardando Aprovação</span>
<span style="top:391.00px;font-size:8.4px;line-height:12px;color:#6a6a6a;left:90.00px;">1</span>
<span style="top:391.00px;font-size:8.4px;line-height:12px;color:#6a6a6a;left:161.20px;transform:scaleX(0.9095);transform-origin:left center;">CT-e</span>
<span style="top:391.00px;font-size:8.4px;line-height:12px;color:#6a6a6a;left:233.50px;transform:scaleX(0.9238);transform-origin:left center;">555</span>
<span style="top:391.00px;font-size:8.4px;line-height:12px;color:#6a6a6a;left:283.25px;transform:scaleX(0.9238);transform-origin:left center;">390</span>
<span style="top:391.00px;font-size:8.4px;line-height:12px;color:#6a6a6a;left:349.50px;transform:scaleX(0.9476);transform-origin:left center;">28/11/2017 10:02</span>
<span style="top:391.00px;font-size:8.4px;line-height:12px;color:#6a6a6a;left:451.25px;transform:scaleX(0.8952);transform-origin:left center;">EMBDEV.39988</span>
<span style="top:391.00px;font-size:8.4px;line-height:12px;color:#6a6a6a;left:560.25px;transform:scaleX(0.9314);transform-origin:left center;">05.257.045/0002-40</span>
<span style="top:391.00px;font-size:8.4px;line-height:12px;color:#6a6a6a;left:694.50px;transform:scaleX(0.9524);transform-origin:left center;">filial 12</span>
<span style="top:391.00px;font-size:8.4px;line-height:12px;color:#6a6a6a;left:809.50px;transform:scaleX(0.9314);transform-origin:left center;">29.187.583/0001-93</span>
<span style="top:391.00px;font-size:8.4px;line-height:12px;color:#6a6a6a;left:924.50px;transform:scaleX(0.8619);transform-origin:left center;">TRANSPORTADOR01</span>
<span style="top:391.00px;font-size:8.4px;line-height:12px;color:#6a6a6a;left:1010.50px;transform:scaleX(0.9314);transform-origin:left center;">05.257.045/0002-40</span>
<span style="top:391.00px;font-size:8.4px;line-height:12px;color:#6a6a6a;left:1096.25px;transform:scaleX(0.8762);transform-origin:left center;">CT-E EMITIDO EM A...</span>
<span style="top:391.00px;font-size:8.4px;line-height:12px;color:#6a6a6a;right:323.50px;transform:scaleX(0.8857);transform-origin:right center;">R$ 101,00</span>
<span style="top:391.00px;font-size:8.4px;line-height:12px;color:#ff9416;font-weight:700;left:1283.50px;transform:scaleX(0.9000);transform-origin:left center;">Pagável</span>
<span style="top:391.00px;font-size:8.4px;line-height:12px;color:#ff0000;font-weight:700;left:1384.50px;transform:scaleX(0.9457);transform-origin:left center;">Substituido</span>
<span style="top:391.00px;font-size:8.4px;line-height:12px;color:#ff9416;font-weight:700;left:1485.40px;transform:scaleX(0.9457);transform-origin:left center;">Aguardando Aprovação</span>
<span style="top:420.00px;font-size:8.4px;line-height:12px;color:#6a6a6a;left:90.00px;">6</span>
<span style="top:420.00px;font-size:8.4px;line-height:12px;color:#6a6a6a;left:161.20px;transform:scaleX(0.9095);transform-origin:left center;">CT-e</span>
<span style="top:420.00px;font-size:8.4px;line-height:12px;color:#6a6a6a;left:233.50px;transform:scaleX(0.9238);transform-origin:left center;">555</span>
<span style="top:420.00px;font-size:8.4px;line-height:12px;color:#6a6a6a;left:283.25px;transform:scaleX(0.9238);transform-origin:left center;">276</span>
<span style="top:420.00px;font-size:8.4px;line-height:12px;color:#6a6a6a;left:349.50px;transform:scaleX(0.9476);transform-origin:left center;">28/11/2017 10:02</span>
<span style="top:420.00px;font-size:8.4px;line-height:12px;color:#6a6a6a;left:451.25px;transform:scaleX(0.8952);transform-origin:left center;">EMBDEV.39987</span>
<span style="top:420.00px;font-size:8.4px;line-height:12px;color:#6a6a6a;left:560.25px;transform:scaleX(0.9314);transform-origin:left center;">05.257.045/0002-40</span>
<span style="top:420.00px;font-size:8.4px;line-height:12px;color:#6a6a6a;left:694.50px;transform:scaleX(0.9524);transform-origin:left center;">filial 12</span>
<span style="top:420.00px;font-size:8.4px;line-height:12px;color:#6a6a6a;left:809.50px;transform:scaleX(0.9314);transform-origin:left center;">29.187.583/0001-93</span>
<span style="top:420.00px;font-size:8.4px;line-height:12px;color:#6a6a6a;left:924.50px;transform:scaleX(0.8619);transform-origin:left center;">TRANSPORTADOR01</span>
<span style="top:420.00px;font-size:8.4px;line-height:12px;color:#6a6a6a;left:1010.50px;transform:scaleX(0.9314);transform-origin:left center;">05.257.045/0002-40</span>
<span style="top:420.00px;font-size:8.4px;line-height:12px;color:#6a6a6a;left:1096.25px;transform:scaleX(0.8762);transform-origin:left center;">CT-E EMITIDO EM A...</span>
<span style="top:420.00px;font-size:8.4px;line-height:12px;color:#6a6a6a;right:323.50px;transform:scaleX(0.8857);transform-origin:right center;">R$ 70,00</span>
<span style="top:420.00px;font-size:8.4px;line-height:12px;color:#ff9416;font-weight:700;left:1283.50px;transform:scaleX(0.9000);transform-origin:left center;">Em Operação</span>
<span style="top:420.00px;font-size:8.4px;line-height:12px;color:#ff0000;font-weight:700;left:1384.50px;transform:scaleX(0.9457);transform-origin:left center;">Anulado</span>
<span style="top:420.00px;font-size:8.4px;line-height:12px;color:#ff9416;font-weight:700;left:1485.40px;transform:scaleX(0.9457);transform-origin:left center;">Aguardando Aprovação</span>
<span style="top:449.00px;font-size:8.4px;line-height:12px;color:#6a6a6a;left:90.00px;">7</span>
<span style="top:449.00px;font-size:8.4px;line-height:12px;color:#6a6a6a;left:161.20px;transform:scaleX(0.9095);transform-origin:left center;">CT-e</span>
<span style="top:449.00px;font-size:8.4px;line-height:12px;color:#6a6a6a;left:233.50px;transform:scaleX(0.9238);transform-origin:left center;">555</span>
<span style="top:449.00px;font-size:8.4px;line-height:12px;color:#6a6a6a;left:283.25px;transform:scaleX(0.9238);transform-origin:left center;">277</span>
<span style="top:449.00px;font-size:8.4px;line-height:12px;color:#6a6a6a;left:349.50px;transform:scaleX(0.9476);transform-origin:left center;">28/11/2017 10:02</span>
<span style="top:449.00px;font-size:8.4px;line-height:12px;color:#6a6a6a;left:451.25px;transform:scaleX(0.8952);transform-origin:left center;">EMBDEV.39987</span>
<span style="top:449.00px;font-size:8.4px;line-height:12px;color:#6a6a6a;left:560.25px;transform:scaleX(0.9314);transform-origin:left center;">05.257.045/0002-40</span>
<span style="top:449.00px;font-size:8.4px;line-height:12px;color:#6a6a6a;left:694.50px;transform:scaleX(0.9524);transform-origin:left center;">filial 12</span>
<span style="top:449.00px;font-size:8.4px;line-height:12px;color:#6a6a6a;left:809.50px;transform:scaleX(0.9314);transform-origin:left center;">29.187.583/0001-93</span>
<span style="top:449.00px;font-size:8.4px;line-height:12px;color:#6a6a6a;left:924.50px;transform:scaleX(0.8619);transform-origin:left center;">TRANSPORTADOR01</span>
<span style="top:449.00px;font-size:8.4px;line-height:12px;color:#6a6a6a;left:1010.50px;transform:scaleX(0.9314);transform-origin:left center;">05.257.045/0002-40</span>
<span style="top:449.00px;font-size:8.4px;line-height:12px;color:#6a6a6a;left:1096.25px;transform:scaleX(0.8762);transform-origin:left center;">CT-E EMITIDO EM A...</span>
<span style="top:449.00px;font-size:8.4px;line-height:12px;color:#6a6a6a;right:323.50px;transform:scaleX(0.8857);transform-origin:right center;">R$ 70,00</span>
<span style="top:449.00px;font-size:8.4px;line-height:12px;color:#ff9416;font-weight:700;left:1283.50px;transform:scaleX(0.9000);transform-origin:left center;">Em Operação</span>
<span style="top:449.00px;font-size:8.4px;line-height:12px;color:#ff0000;font-weight:700;left:1384.50px;transform:scaleX(0.9457);transform-origin:left center;">Cancelado</span>
<span style="top:449.00px;font-size:8.4px;line-height:12px;color:#ff9416;font-weight:700;left:1485.40px;transform:scaleX(0.9457);transform-origin:left center;">Aguardando Aprovação</span>
<span style="top:478.00px;font-size:8.4px;line-height:12px;color:#6a6a6a;left:90.00px;">9</span>
<span style="top:478.00px;font-size:8.4px;line-height:12px;color:#6a6a6a;left:161.20px;transform:scaleX(0.9095);transform-origin:left center;">CT-e</span>
<span style="top:478.00px;font-size:8.4px;line-height:12px;color:#6a6a6a;left:233.50px;transform:scaleX(0.9238);transform-origin:left center;">555</span>
<span style="top:478.00px;font-size:8.4px;line-height:12px;color:#6a6a6a;left:283.25px;transform:scaleX(0.9238);transform-origin:left center;">277</span>
<span style="top:478.00px;font-size:8.4px;line-height:12px;color:#6a6a6a;left:349.50px;transform:scaleX(0.9476);transform-origin:left center;">28/11/2017 10:02</span>
<span style="top:478.00px;font-size:8.4px;line-height:12px;color:#6a6a6a;left:451.25px;transform:scaleX(0.8952);transform-origin:left center;">EMBDEV.39987</span>
<span style="top:478.00px;font-size:8.4px;line-height:12px;color:#6a6a6a;left:560.25px;transform:scaleX(0.9314);transform-origin:left center;">05.257.045/0002-40</span>
<span style="top:478.00px;font-size:8.4px;line-height:12px;color:#6a6a6a;left:694.50px;transform:scaleX(0.9524);transform-origin:left center;">filial 12</span>
<span style="top:478.00px;font-size:8.4px;line-height:12px;color:#6a6a6a;left:809.50px;transform:scaleX(0.9314);transform-origin:left center;">29.187.583/0001-93</span>
<span style="top:478.00px;font-size:8.4px;line-height:12px;color:#6a6a6a;left:924.50px;transform:scaleX(0.8619);transform-origin:left center;">TRANSPORTADOR01</span>
<span style="top:478.00px;font-size:8.4px;line-height:12px;color:#6a6a6a;left:1010.50px;transform:scaleX(0.9314);transform-origin:left center;">05.257.045/0002-40</span>
<span style="top:478.00px;font-size:8.4px;line-height:12px;color:#6a6a6a;left:1096.25px;transform:scaleX(0.8762);transform-origin:left center;">CT-E EMITIDO EM A...</span>
<span style="top:478.00px;font-size:8.4px;line-height:12px;color:#6a6a6a;right:323.50px;transform:scaleX(0.8857);transform-origin:right center;">R$ 70,00</span>
<span style="top:478.00px;font-size:8.4px;line-height:12px;color:#ff9416;font-weight:700;left:1283.50px;transform:scaleX(0.9000);transform-origin:left center;">Em Operação</span>
<span style="top:478.00px;font-size:8.4px;line-height:12px;color:#ff0000;font-weight:700;left:1384.50px;transform:scaleX(0.9457);transform-origin:left center;">Substituido</span>
<span style="top:478.00px;font-size:8.4px;line-height:12px;color:#ff9416;font-weight:700;left:1485.40px;transform:scaleX(0.9457);transform-origin:left center;">Aguardando Aprovação</span>
<span style="top:507.00px;font-size:8.4px;line-height:12px;color:#6a6a6a;left:90.00px;transform:scaleX(0.9238);transform-origin:left center;">11</span>
<span style="top:507.00px;font-size:8.4px;line-height:12px;color:#6a6a6a;left:161.20px;transform:scaleX(0.9095);transform-origin:left center;">CT-e</span>
<span style="top:507.00px;font-size:8.4px;line-height:12px;color:#6a6a6a;left:233.50px;transform:scaleX(0.9238);transform-origin:left center;">555</span>
<span style="top:507.00px;font-size:8.4px;line-height:12px;color:#6a6a6a;left:283.25px;transform:scaleX(0.9238);transform-origin:left center;">391</span>
<span style="top:507.00px;font-size:8.4px;line-height:12px;color:#6a6a6a;left:349.50px;transform:scaleX(0.9476);transform-origin:left center;">28/11/2017 10:02</span>
<span style="top:507.00px;font-size:8.4px;line-height:12px;color:#6a6a6a;left:451.25px;transform:scaleX(0.8952);transform-origin:left center;">EMBDEV.39988</span>
<span style="top:507.00px;font-size:8.4px;line-height:12px;color:#6a6a6a;left:560.25px;transform:scaleX(0.9314);transform-origin:left center;">05.257.045/0002-40</span>
<span style="top:507.00px;font-size:8.4px;line-height:12px;color:#6a6a6a;left:694.50px;transform:scaleX(0.9524);transform-origin:left center;">filial 12</span>
<span style="top:507.00px;font-size:8.4px;line-height:12px;color:#6a6a6a;left:809.50px;transform:scaleX(0.9314);transform-origin:left center;">29.187.583/0001-93</span>
<span style="top:507.00px;font-size:8.4px;line-height:12px;color:#6a6a6a;left:924.50px;transform:scaleX(0.8619);transform-origin:left center;">TRANSPORTADOR01</span>
<span style="top:507.00px;font-size:8.4px;line-height:12px;color:#6a6a6a;left:1010.50px;transform:scaleX(0.9314);transform-origin:left center;">05.257.045/0002-40</span>
<span style="top:507.00px;font-size:8.4px;line-height:12px;color:#6a6a6a;left:1096.25px;transform:scaleX(0.8762);transform-origin:left center;">CT-E EMITIDO EM A...</span>
<span style="top:507.00px;font-size:8.4px;line-height:12px;color:#6a6a6a;right:323.50px;transform:scaleX(0.8857);transform-origin:right center;">R$ 101,00</span>
<span style="top:507.00px;font-size:8.4px;line-height:12px;color:#ff9416;font-weight:700;left:1283.50px;transform:scaleX(0.9000);transform-origin:left center;">Em Faturamento</span>
<span style="top:507.00px;font-size:8.4px;line-height:12px;color:#057c12;font-weight:700;left:1384.50px;transform:scaleX(0.9457);transform-origin:left center;">Complementado</span>
<span style="top:507.00px;font-size:8.4px;line-height:12px;color:#ff9416;font-weight:700;left:1485.40px;transform:scaleX(0.9457);transform-origin:left center;">Aguardando Aprovação</span>
<span style="top:536.00px;font-size:8.4px;line-height:12px;color:#6a6a6a;left:90.00px;transform:scaleX(0.9238);transform-origin:left center;">16</span>
<span style="top:536.00px;font-size:8.4px;line-height:12px;color:#6a6a6a;left:161.20px;transform:scaleX(0.9095);transform-origin:left center;">CT-e</span>
<span style="top:536.00px;font-size:8.4px;line-height:12px;color:#6a6a6a;left:233.50px;transform:scaleX(0.9238);transform-origin:left center;">555</span>
<span style="top:536.00px;font-size:8.4px;line-height:12px;color:#6a6a6a;left:283.25px;transform:scaleX(0.9238);transform-origin:left center;">274</span>
<span style="top:536.00px;font-size:8.4px;line-height:12px;color:#6a6a6a;left:349.50px;transform:scaleX(0.9476);transform-origin:left center;">28/11/2017 10:02</span>
<span style="top:536.00px;font-size:8.4px;line-height:12px;color:#6a6a6a;left:451.25px;transform:scaleX(0.8952);transform-origin:left center;">EMBDEV.39987</span>
<span style="top:536.00px;font-size:8.4px;line-height:12px;color:#6a6a6a;left:560.25px;transform:scaleX(0.9314);transform-origin:left center;">05.257.045/0002-40</span>
<span style="top:536.00px;font-size:8.4px;line-height:12px;color:#6a6a6a;left:694.50px;transform:scaleX(0.9524);transform-origin:left center;">filial 12</span>
<span style="top:536.00px;font-size:8.4px;line-height:12px;color:#6a6a6a;left:809.50px;transform:scaleX(0.9314);transform-origin:left center;">29.187.583/0001-93</span>
<span style="top:536.00px;font-size:8.4px;line-height:12px;color:#6a6a6a;left:924.50px;transform:scaleX(0.8619);transform-origin:left center;">TRANSPORTADOR01</span>
<span style="top:536.00px;font-size:8.4px;line-height:12px;color:#6a6a6a;left:1010.50px;transform:scaleX(0.9314);transform-origin:left center;">05.257.045/0002-40</span>
<span style="top:536.00px;font-size:8.4px;line-height:12px;color:#6a6a6a;left:1096.25px;transform:scaleX(0.8762);transform-origin:left center;">CT-E EMITIDO EM A...</span>
<span style="top:536.00px;font-size:8.4px;line-height:12px;color:#6a6a6a;right:323.50px;transform:scaleX(0.8857);transform-origin:right center;">R$ 70,00</span>
<span style="top:536.00px;font-size:8.4px;line-height:12px;color:#ff9416;font-weight:700;left:1283.50px;transform:scaleX(0.9000);transform-origin:left center;">Em Operação</span>
<span style="top:536.00px;font-size:8.4px;line-height:12px;color:#ff0000;font-weight:700;left:1384.50px;transform:scaleX(0.9457);transform-origin:left center;">Cancelado</span>
<span style="top:536.00px;font-size:8.4px;line-height:12px;color:#ff9416;font-weight:700;left:1485.40px;transform:scaleX(0.9457);transform-origin:left center;">Aguardando Aprovação</span>
<span style="top:565.00px;font-size:8.4px;line-height:12px;color:#6a6a6a;left:90.00px;transform:scaleX(0.9238);transform-origin:left center;">21</span>
<span style="top:565.00px;font-size:8.4px;line-height:12px;color:#6a6a6a;left:161.20px;transform:scaleX(0.9095);transform-origin:left center;">CT-e</span>
<span style="top:565.00px;font-size:8.4px;line-height:12px;color:#6a6a6a;left:233.50px;transform:scaleX(0.9238);transform-origin:left center;">555</span>
<span style="top:565.00px;font-size:8.4px;line-height:12px;color:#6a6a6a;left:283.25px;transform:scaleX(0.9238);transform-origin:left center;">385</span>
<span style="top:565.00px;font-size:8.4px;line-height:12px;color:#6a6a6a;left:349.50px;transform:scaleX(0.9476);transform-origin:left center;">28/11/2017 10:02</span>
<span style="top:565.00px;font-size:8.4px;line-height:12px;color:#6a6a6a;left:451.25px;transform:scaleX(0.8952);transform-origin:left center;">EMBDEV.39972</span>
<span style="top:565.00px;font-size:8.4px;line-height:12px;color:#6a6a6a;left:560.25px;transform:scaleX(0.9314);transform-origin:left center;">05.257.045/0002-40</span>
<span style="top:565.00px;font-size:8.4px;line-height:12px;color:#6a6a6a;left:694.50px;transform:scaleX(0.9524);transform-origin:left center;">filial 12</span>
<span style="top:565.00px;font-size:8.4px;line-height:12px;color:#6a6a6a;left:809.50px;transform:scaleX(0.9314);transform-origin:left center;">29.187.583/0001-93</span>
<span style="top:565.00px;font-size:8.4px;line-height:12px;color:#6a6a6a;left:924.50px;transform:scaleX(0.8619);transform-origin:left center;">TRANSPORTADOR01</span>
<span style="top:565.00px;font-size:8.4px;line-height:12px;color:#6a6a6a;left:1010.50px;transform:scaleX(0.9314);transform-origin:left center;">05.257.045/0002-40</span>
<span style="top:565.00px;font-size:8.4px;line-height:12px;color:#6a6a6a;left:1096.25px;transform:scaleX(0.8762);transform-origin:left center;">CT-E EMITIDO EM A...</span>
<span style="top:565.00px;font-size:8.4px;line-height:12px;color:#6a6a6a;right:323.50px;transform:scaleX(0.8857);transform-origin:right center;">R$ 101,00</span>
<span style="top:565.00px;font-size:8.4px;line-height:12px;color:#ff9416;font-weight:700;left:1283.50px;transform:scaleX(0.9000);transform-origin:left center;">Pagável</span>
<span style="top:565.00px;font-size:8.4px;line-height:12px;color:#057c12;font-weight:700;left:1384.50px;transform:scaleX(0.9457);transform-origin:left center;">Autorizado</span>
<span style="top:565.00px;font-size:8.4px;line-height:12px;color:#ff9416;font-weight:700;left:1485.40px;transform:scaleX(0.9457);transform-origin:left center;">Aguardando Aprovação</span>
<span style="top:594.00px;font-size:8.4px;line-height:12px;color:#6a6a6a;left:90.00px;transform:scaleX(0.9238);transform-origin:left center;">22</span>
<span style="top:594.00px;font-size:8.4px;line-height:12px;color:#6a6a6a;left:161.20px;transform:scaleX(0.9095);transform-origin:left center;">CT-e</span>
<span style="top:594.00px;font-size:8.4px;line-height:12px;color:#6a6a6a;left:233.50px;transform:scaleX(0.9238);transform-origin:left center;">555</span>
<span style="top:594.00px;font-size:8.4px;line-height:12px;color:#6a6a6a;left:283.25px;transform:scaleX(0.9238);transform-origin:left center;">382</span>
<span style="top:594.00px;font-size:8.4px;line-height:12px;color:#6a6a6a;left:349.50px;transform:scaleX(0.9476);transform-origin:left center;">28/11/2017 10:02</span>
<span style="top:594.00px;font-size:8.4px;line-height:12px;color:#6a6a6a;left:451.25px;transform:scaleX(0.8952);transform-origin:left center;">EMBDEV.39969</span>
<span style="top:594.00px;font-size:8.4px;line-height:12px;color:#6a6a6a;left:560.25px;transform:scaleX(0.9314);transform-origin:left center;">05.257.045/0002-40</span>
<span style="top:594.00px;font-size:8.4px;line-height:12px;color:#6a6a6a;left:694.50px;transform:scaleX(0.9524);transform-origin:left center;">filial 12</span>
<span style="top:594.00px;font-size:8.4px;line-height:12px;color:#6a6a6a;left:809.50px;transform:scaleX(0.9314);transform-origin:left center;">29.187.583/0001-93</span>
<span style="top:594.00px;font-size:8.4px;line-height:12px;color:#6a6a6a;left:924.50px;transform:scaleX(0.8619);transform-origin:left center;">TRANSPORTADOR01</span>
<span style="top:594.00px;font-size:8.4px;line-height:12px;color:#6a6a6a;left:1010.50px;transform:scaleX(0.9314);transform-origin:left center;">05.257.045/0002-40</span>
<span style="top:594.00px;font-size:8.4px;line-height:12px;color:#6a6a6a;left:1096.25px;transform:scaleX(0.8762);transform-origin:left center;">CT-E EMITIDO EM A...</span>
<span style="top:594.00px;font-size:8.4px;line-height:12px;color:#6a6a6a;right:323.50px;transform:scaleX(0.8857);transform-origin:right center;">R$ 70,00</span>
<span style="top:594.00px;font-size:8.4px;line-height:12px;color:#ff9416;font-weight:700;left:1283.50px;transform:scaleX(0.9000);transform-origin:left center;">Em Operação</span>
<span style="top:594.00px;font-size:8.4px;line-height:12px;color:#057c12;font-weight:700;left:1384.50px;transform:scaleX(0.9457);transform-origin:left center;">Autorizado</span>
<span style="top:594.00px;font-size:8.4px;line-height:12px;color:#ff9416;font-weight:700;left:1485.40px;transform:scaleX(0.9457);transform-origin:left center;">Aguardando Aprovação</span>
<span style="top:623.00px;font-size:8.4px;line-height:12px;color:#6a6a6a;left:90.00px;transform:scaleX(0.9238);transform-origin:left center;">23</span>
<span style="top:623.00px;font-size:8.4px;line-height:12px;color:#6a6a6a;left:161.20px;transform:scaleX(0.9095);transform-origin:left center;">CT-e</span>
<span style="top:623.00px;font-size:8.4px;line-height:12px;color:#6a6a6a;left:233.50px;transform:scaleX(0.9238);transform-origin:left center;">555</span>
<span style="top:623.00px;font-size:8.4px;line-height:12px;color:#6a6a6a;left:283.25px;transform:scaleX(0.9238);transform-origin:left center;">275</span>
<span style="top:623.00px;font-size:8.4px;line-height:12px;color:#6a6a6a;left:349.50px;transform:scaleX(0.9476);transform-origin:left center;">28/11/2017 10:02</span>
<span style="top:623.00px;font-size:8.4px;line-height:12px;color:#6a6a6a;left:451.25px;transform:scaleX(0.8952);transform-origin:left center;">EMBDEV.39987</span>
<span style="top:623.00px;font-size:8.4px;line-height:12px;color:#6a6a6a;left:560.25px;transform:scaleX(0.9314);transform-origin:left center;">05.257.045/0002-40</span>
<span style="top:623.00px;font-size:8.4px;line-height:12px;color:#6a6a6a;left:694.50px;transform:scaleX(0.9524);transform-origin:left center;">filial 12</span>
<span style="top:623.00px;font-size:8.4px;line-height:12px;color:#6a6a6a;left:809.50px;transform:scaleX(0.9314);transform-origin:left center;">29.187.583/0001-93</span>
<span style="top:623.00px;font-size:8.4px;line-height:12px;color:#6a6a6a;left:924.50px;transform:scaleX(0.8619);transform-origin:left center;">TRANSPORTADOR01</span>
<span style="top:623.00px;font-size:8.4px;line-height:12px;color:#6a6a6a;left:1010.50px;transform:scaleX(0.9314);transform-origin:left center;">05.257.045/0002-40</span>
<span style="top:623.00px;font-size:8.4px;line-height:12px;color:#6a6a6a;left:1096.25px;transform:scaleX(0.8762);transform-origin:left center;">CT-E EMITIDO EM A...</span>
<span style="top:623.00px;font-size:8.4px;line-height:12px;color:#6a6a6a;right:323.50px;transform:scaleX(0.8857);transform-origin:right center;">R$ 70,00</span>
<span style="top:623.00px;font-size:8.4px;line-height:12px;color:#ff9416;font-weight:700;left:1283.50px;transform:scaleX(0.9000);transform-origin:left center;">Em Operação</span>
<span style="top:623.00px;font-size:8.4px;line-height:12px;color:#ff0000;font-weight:700;left:1384.50px;transform:scaleX(0.9457);transform-origin:left center;">Substituido</span>
<span style="top:623.00px;font-size:8.4px;line-height:12px;color:#ff9416;font-weight:700;left:1485.40px;transform:scaleX(0.9457);transform-origin:left center;">Aguardando Aprovação</span>
<span style="top:652.00px;font-size:8.4px;line-height:12px;color:#6a6a6a;left:90.00px;transform:scaleX(0.9238);transform-origin:left center;">24</span>
<span style="top:652.00px;font-size:8.4px;line-height:12px;color:#6a6a6a;left:161.20px;transform:scaleX(0.9095);transform-origin:left center;">CT-e</span>
<span style="top:652.00px;font-size:8.4px;line-height:12px;color:#6a6a6a;left:233.50px;transform:scaleX(0.9238);transform-origin:left center;">555</span>
<span style="top:652.00px;font-size:8.4px;line-height:12px;color:#6a6a6a;left:283.25px;transform:scaleX(0.9238);transform-origin:left center;">284</span>
<span style="top:652.00px;font-size:8.4px;line-height:12px;color:#6a6a6a;left:349.50px;transform:scaleX(0.9476);transform-origin:left center;">28/11/2017 10:02</span>
<span style="top:652.00px;font-size:8.4px;line-height:12px;color:#6a6a6a;left:451.25px;transform:scaleX(0.8952);transform-origin:left center;">EMBDEV.39965</span>
<span style="top:652.00px;font-size:8.4px;line-height:12px;color:#6a6a6a;left:560.25px;transform:scaleX(0.9314);transform-origin:left center;">05.257.045/0002-40</span>
<span style="top:652.00px;font-size:8.4px;line-height:12px;color:#6a6a6a;left:694.50px;transform:scaleX(0.9524);transform-origin:left center;">filial 12</span>
<span style="top:652.00px;font-size:8.4px;line-height:12px;color:#6a6a6a;left:809.50px;transform:scaleX(0.9314);transform-origin:left center;">29.187.583/0001-93</span>
<span style="top:652.00px;font-size:8.4px;line-height:12px;color:#6a6a6a;left:924.50px;transform:scaleX(0.8619);transform-origin:left center;">TRANSPORTADOR01</span>
<span style="top:652.00px;font-size:8.4px;line-height:12px;color:#6a6a6a;left:1010.50px;transform:scaleX(0.9314);transform-origin:left center;">05.257.045/0002-40</span>
<span style="top:652.00px;font-size:8.4px;line-height:12px;color:#6a6a6a;left:1096.25px;transform:scaleX(0.8762);transform-origin:left center;">CT-E EMITIDO EM A...</span>
<span style="top:652.00px;font-size:8.4px;line-height:12px;color:#6a6a6a;right:323.50px;transform:scaleX(0.8857);transform-origin:right center;">R$ 70,00</span>
<span style="top:652.00px;font-size:8.4px;line-height:12px;color:#ff9416;font-weight:700;left:1283.50px;transform:scaleX(0.9000);transform-origin:left center;">Em Operação</span>
<span style="top:652.00px;font-size:8.4px;line-height:12px;color:#057c12;font-weight:700;left:1384.50px;transform:scaleX(0.9457);transform-origin:left center;">Autorizado</span>
<span style="top:652.00px;font-size:8.4px;line-height:12px;color:#ff9416;font-weight:700;left:1485.40px;transform:scaleX(0.9457);transform-origin:left center;">Aguardando Aprovação</span>
<span style="top:681.00px;font-size:8.4px;line-height:12px;color:#6a6a6a;left:90.00px;transform:scaleX(0.9238);transform-origin:left center;">25</span>
<span style="top:681.00px;font-size:8.4px;line-height:12px;color:#6a6a6a;left:161.20px;transform:scaleX(0.9095);transform-origin:left center;">CT-e</span>
<span style="top:681.00px;font-size:8.4px;line-height:12px;color:#6a6a6a;left:233.50px;transform:scaleX(0.9238);transform-origin:left center;">555</span>
<span style="top:681.00px;font-size:8.4px;line-height:12px;color:#6a6a6a;left:283.25px;transform:scaleX(0.9238);transform-origin:left center;">272</span>
<span style="top:681.00px;font-size:8.4px;line-height:12px;color:#6a6a6a;left:349.50px;transform:scaleX(0.9476);transform-origin:left center;">28/11/2017 10:02</span>
<span style="top:681.00px;font-size:8.4px;line-height:12px;color:#6a6a6a;left:451.25px;transform:scaleX(0.8952);transform-origin:left center;">EMBDEV.39892</span>
<span style="top:681.00px;font-size:8.4px;line-height:12px;color:#6a6a6a;left:560.25px;transform:scaleX(0.9314);transform-origin:left center;">05.257.045/0002-40</span>
<span style="top:681.00px;font-size:8.4px;line-height:12px;color:#6a6a6a;left:694.50px;transform:scaleX(0.9524);transform-origin:left center;">filial 12</span>
<span style="top:681.00px;font-size:8.4px;line-height:12px;color:#6a6a6a;left:809.50px;transform:scaleX(0.9314);transform-origin:left center;">29.187.583/0001-93</span>
<span style="top:681.00px;font-size:8.4px;line-height:12px;color:#6a6a6a;left:924.50px;transform:scaleX(0.8619);transform-origin:left center;">TRANSPORTADOR01</span>
<span style="top:681.00px;font-size:8.4px;line-height:12px;color:#6a6a6a;left:1010.50px;transform:scaleX(0.9314);transform-origin:left center;">05.257.045/0002-40</span>
<span style="top:681.00px;font-size:8.4px;line-height:12px;color:#6a6a6a;left:1096.25px;transform:scaleX(0.8762);transform-origin:left center;">CT-E EMITIDO EM A...</span>
<span style="top:681.00px;font-size:8.4px;line-height:12px;color:#6a6a6a;right:323.50px;transform:scaleX(0.8857);transform-origin:right center;">R$ 70,00</span>
<span style="top:681.00px;font-size:8.4px;line-height:12px;color:#ff9416;font-weight:700;left:1283.50px;transform:scaleX(0.9000);transform-origin:left center;">Em Operação</span>
<span style="top:681.00px;font-size:8.4px;line-height:12px;color:#057c12;font-weight:700;left:1384.50px;transform:scaleX(0.9457);transform-origin:left center;">Complementado</span>
<span style="top:681.00px;font-size:8.4px;line-height:12px;color:#057c12;font-weight:700;left:1485.40px;transform:scaleX(0.9457);transform-origin:left center;">Aprovado</span>
<span style="top:710.00px;font-size:8.4px;line-height:12px;color:#6a6a6a;left:90.00px;transform:scaleX(0.9238);transform-origin:left center;">20</span>
<span style="top:710.00px;font-size:8.4px;line-height:12px;color:#6a6a6a;left:161.20px;transform:scaleX(0.9095);transform-origin:left center;">RPA</span>
<span style="top:710.00px;font-size:8.4px;line-height:12px;color:#6a6a6a;left:233.50px;transform:scaleX(0.9238);transform-origin:left center;">E1</span>
<span style="top:710.00px;font-size:8.4px;line-height:12px;color:#6a6a6a;left:283.25px;">1</span>
<span style="top:710.00px;font-size:8.4px;line-height:12px;color:#6a6a6a;left:349.50px;transform:scaleX(0.9476);transform-origin:left center;">14/06/2018 17:14</span>
<span style="top:710.00px;font-size:8.4px;line-height:12px;color:#6a6a6a;left:451.25px;transform:scaleX(0.8952);transform-origin:left center;">EMBDEV.39550</span>
<span style="top:710.00px;font-size:8.4px;line-height:12px;color:#6a6a6a;left:560.25px;transform:scaleX(0.9314);transform-origin:left center;">05.257.045/0002-40</span>
<span style="top:710.00px;font-size:8.4px;line-height:12px;color:#6a6a6a;left:694.50px;transform:scaleX(0.9524);transform-origin:left center;">filial 12</span>
<span style="top:710.00px;font-size:8.4px;line-height:12px;color:#6a6a6a;left:809.50px;transform:scaleX(0.9314);transform-origin:left center;">29.187.583/0001-93</span>
<span style="top:710.00px;font-size:8.4px;line-height:12px;color:#6a6a6a;left:924.50px;transform:scaleX(0.8619);transform-origin:left center;">TRANSPORTADOR01</span>
<span style="top:710.00px;font-size:8.4px;line-height:12px;color:#6a6a6a;left:1010.50px;transform:scaleX(0.9314);transform-origin:left center;">34.993.377/0001-00</span>
<span style="top:710.00px;font-size:8.4px;line-height:12px;color:#6a6a6a;left:1096.25px;transform:scaleX(0.8762);transform-origin:left center;">RAZAO SOCIAL DO ...</span>
<span style="top:710.00px;font-size:8.4px;line-height:12px;color:#6a6a6a;right:323.50px;transform:scaleX(0.8857);transform-origin:right center;">R$ 870,00</span>
<span style="top:710.00px;font-size:8.4px;line-height:12px;color:#ff9416;font-weight:700;left:1283.50px;transform:scaleX(0.9000);transform-origin:left center;">Em Operação</span>
<span style="top:710.00px;font-size:8.4px;line-height:12px;color:#057c12;font-weight:700;left:1384.50px;transform:scaleX(0.9457);transform-origin:left center;">Autorizado</span>
<span style="top:710.00px;font-size:8.4px;line-height:12px;color:#ff9416;font-weight:700;left:1485.40px;transform:scaleX(0.9457);transform-origin:left center;">Aguardando Aprovação</span>
<span style="top:738.60px;font-size:9.5px;line-height:14px;color:#3f51b5;left:93.40px;-webkit-text-stroke:0.25px #3f51b5;">1</span>
<span style="top:737.00px;font-size:9.5px;line-height:14px;color:#666;left:173.00px;">1...</span>
<span style="top:737.00px;font-size:9.5px;line-height:14px;color:#555;left:215.60px;transform:scaleX(0.9821);transform-origin:left center;">itens por página</span>
<span style="top:740.20px;font-size:9.5px;line-height:14px;color:#a9a9a9;left:1443.50px;transform:scaleX(0.9667);transform-origin:left center;">Exibindo itens 1 - 33 de 33</span>
</body></html>
